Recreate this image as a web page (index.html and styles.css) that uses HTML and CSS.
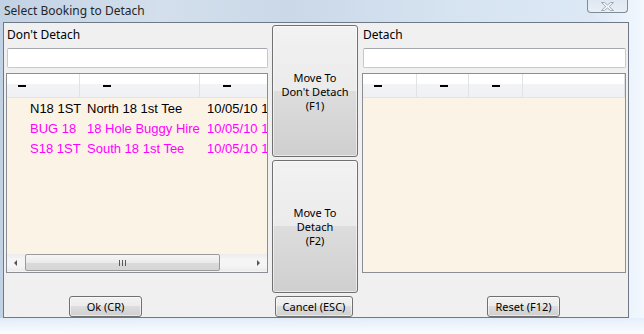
FILE: index.html
```html
<!DOCTYPE html>
<html lang="en">
<head>
  <meta charset="UTF-8" />
  <title>Select Booking to Detach</title>
  <link rel="stylesheet" href="styles.css">
</head>
<body>
  <div class="window">
    <div class="titlebar">
      <span class="title">Select Booking to Detach</span>
      <div class="close-btn">
        <svg width="13" height="9" viewBox="0 0 13 9">
          <polygon points="0.5,0.5 3.5,0.5 6.5,3 9.5,0.5 12.5,0.5 8.2,4.5 12.5,8.5 9.5,8.5 6.5,6 3.5,8.5 0.5,8.5 4.8,4.5" fill="#f6f8fb" stroke="#8d98a5" stroke-width="0.8"/>
        </svg>
      </div>
    </div>

    <div class="client">
      <div class="main">
        <!-- left: bookings that stay -->
        <div class="panel">
          <div class="panel-label">Don't Detach</div>
          <div class="search"></div>
          <div class="list">
            <div class="list-head">
              <div class="hcol l1"><span class="dash first"></span></div>
              <div class="hcol l2"><span class="dash"></span></div>
              <div class="hcol l3"><span class="dash"></span></div>
            </div>
            <div class="list-body">
              <div class="row">
                <div class="cell l1">N18 1ST</div>
                <div class="cell l2">North 18 1st Tee</div>
                <div class="cell l3">10/05/10 1</div>
              </div>
              <div class="row pink">
                <div class="cell l1">BUG 18</div>
                <div class="cell l2">18 Hole Buggy Hire</div>
                <div class="cell l3">10/05/10 1</div>
              </div>
              <div class="row pink">
                <div class="cell l1">S18 1ST</div>
                <div class="cell l2">South 18 1st Tee</div>
                <div class="cell l3">10/05/10 1</div>
              </div>
            </div>
            <div class="hscroll">
              <div class="arrow-btn"><span class="arrow left"></span></div>
              <div class="track">
                <div class="thumb"><span class="grip"></span></div>
              </div>
              <div class="arrow-btn"><span class="arrow right"></span></div>
            </div>
          </div>
        </div>

        <!-- middle: move buttons -->
        <div class="middle">
          <button class="btn big"><span class="ln">Move To</span><span class="ln">Don't Detach</span><span class="ln">(F1)</span></button>
          <button class="btn big"><span class="ln">Move To</span><span class="ln">Detach</span><span class="ln">(F2)</span></button>
        </div>

        <!-- right: bookings to detach -->
        <div class="panel wide">
          <div class="panel-label">Detach</div>
          <div class="search"></div>
          <div class="list">
            <div class="list-head">
              <div class="hcol r1"><span class="dash first"></span></div>
              <div class="hcol r2"><span class="dash"></span></div>
              <div class="hcol r3"><span class="dash"></span></div>
              <div class="hcol r4"></div>
            </div>
            <div class="list-body"></div>
          </div>
        </div>
      </div>

      <div class="footer">
        <div class="foot-left"><button class="btn ok">Ok (CR)</button></div>
        <div class="foot-mid"><button class="btn cancel">Cancel (ESC)</button></div>
        <div class="foot-right"><button class="btn reset">Reset (F12)</button></div>
      </div>
    </div>
  </div>
</body>
</html>
```

FILE: styles.css
```css
html, body {
  margin: 0;
  padding: 0;
}

body {
  width: 644px;
  height: 334px;
  overflow: hidden;
  font-family: "Noto Sans", "Segoe UI", sans-serif;
  font-size: 12px;
  color: #000;
}

.window {
  width: 644px;
  height: 334px;
  background:
    linear-gradient(to bottom, rgba(255,255,255,0) 318px, rgba(228,238,250,0.9) 318px, #fbfdff 334px),
    linear-gradient(to right, #c2d2e5 0%, #d3dfec 25%, #cad8e8 45%, #d6e3f1 70%, #dce8f6 92%, #f3f8fe 100%);
}

.titlebar {
  height: 22px;
  display: flex;
  align-items: flex-start;
}

.title {
  padding: 2px 0 0 4px;
  color: #262626;
  line-height: 17px;
}

.close-btn {
  margin-left: auto;
  margin-right: 16px;
  width: 41px;
  height: 13px;
  box-sizing: border-box;
  border: 1px solid #7f8b99;
  border-top: none;
  border-radius: 0 0 4px 4px;
  background: linear-gradient(#dfe7f0, #e9eff6);
  display: flex;
  align-items: center;
  justify-content: center;
}

.client {
  margin-left: 3px;
  width: 626px;
  height: 296px;
  box-sizing: border-box;
  border: 1px solid #6f7985;
  background: #f0f0f0;
  display: flex;
  flex-direction: column;
}

.main {
  display: flex;
  gap: 4px;
  padding: 2px 2px 0 2px;
  height: 268px;
}

.panel {
  width: 262px;
  display: flex;
  flex-direction: column;
}

.panel.wide {
  width: 264px;
}

.panel-label {
  height: 23px;
  line-height: 20px;
  padding-left: 1px;
}

.search {
  height: 20px;
  box-sizing: border-box;
  margin-left: 1px;
  border: 1px solid #c7c9cd;
  border-top-color: #a4a7ad;
  border-radius: 2px;
  background: #fff;
}

.list {
  margin-top: 5px;
  height: 200px;
  box-sizing: border-box;
  border: 1px solid #8b8f95;
  background: #fcf3e7;
  display: flex;
  flex-direction: column;
  overflow: hidden;
}

.list-head {
  height: 24px;
  flex-shrink: 0;
  box-sizing: border-box;
  display: flex;
  background: linear-gradient(#ffffff 0%, #ffffff 42%, #f2f3f5 42%, #eff1f4 100%);
  border-bottom: 1px solid #e2e4e7;
}

.hcol {
  box-sizing: border-box;
  border-right: 1px solid #e0e2e5;
  display: flex;
  align-items: center;
  padding-top: 1px;
}

.dash {
  width: 8px;
  height: 2px;
  margin-left: 23px;
  background: #000;
}

.dash.first {
  margin-left: 11px;
}

.l1 { width: 73px; flex-shrink: 0; }
.l2 { width: 120px; flex-shrink: 0; }
.l3 { flex: 1; min-width: 0; overflow: hidden; }

.list-head .l3 { border-right: none; }

.r1 { width: 54px; }
.r2 { width: 52px; }
.r3 { width: 54px; }
.r4 { flex: 1; }

.list-body {
  flex: 1;
  padding-top: 1px;
  font-family: "Liberation Sans", Arial, sans-serif;
  font-size: 13px;
}

.row {
  display: flex;
  height: 20px;
  line-height: 20px;
  white-space: nowrap;
}

.row.pink {
  color: #ff00ff;
}

.cell {
  padding-left: 7px;
  box-sizing: border-box;
}

.cell.l1 {
  padding-left: 23px;
}

.hscroll {
  height: 17px;
  margin-bottom: 1px;
  flex-shrink: 0;
  display: flex;
  background: linear-gradient(#ebebeb, #f5f5f5 30%, #f5f5f5 70%, #ebebeb);
}

.arrow-btn {
  width: 17px;
  display: flex;
  align-items: center;
  justify-content: center;
}

.arrow {
  width: 0;
  height: 0;
  border-top: 3px solid transparent;
  border-bottom: 3px solid transparent;
}

.arrow.left {
  border-right: 3px solid #555;
}

.arrow.right {
  border-left: 3px solid #555;
}

.track {
  flex: 1;
  display: flex;
  padding: 0 1px;
}

.thumb {
  width: 195px;
  box-sizing: border-box;
  border: 1px solid #9a9a9a;
  border-radius: 2px;
  background: linear-gradient(#f6f6f6, #eaeaea 50%, #dadada 51%, #d6d6d6);
  display: flex;
  align-items: center;
  justify-content: center;
}

.grip {
  width: 7px;
  height: 6px;
  background: repeating-linear-gradient(to right, #595959 0 1px, transparent 1px 3px);
}

.middle {
  width: 86px;
  display: flex;
  flex-direction: column;
  gap: 3px;
}

.btn {
  box-sizing: border-box;
  border: 1px solid #707070;
  border-radius: 3px;
  background: linear-gradient(#f2f2f2 0%, #ebebeb 50%, #dddddd 50%, #cfcfcf 100%);
  box-shadow: inset 0 0 0 1px rgba(255, 255, 255, 0.55);
  font-family: "Noto Sans", "Segoe UI", sans-serif;
  font-size: 11px;
  color: #000;
  padding: 0;
}

.btn.big {
  height: 132px;
  display: flex;
  flex-direction: column;
  align-items: center;
  justify-content: center;
  padding-top: 1px;
}

.btn.big + .btn.big {
  height: 133px;
}

.ln {
  display: block;
  height: 14px;
  line-height: 14px;
}

.footer {
  display: flex;
  gap: 4px;
  padding: 3px 2px 0 2px;
}

.footer .btn {
  height: 21px;
  line-height: 17px;
}

.foot-left {
  width: 262px;
}

.foot-mid {
  width: 86px;
}

.foot-right {
  width: 264px;
}

.ok {
  margin-left: 63px;
  width: 73px;
}

.cancel {
  margin-left: 3px;
  width: 78px;
}

.reset {
  margin-left: 125px;
  width: 73px;
}
```
